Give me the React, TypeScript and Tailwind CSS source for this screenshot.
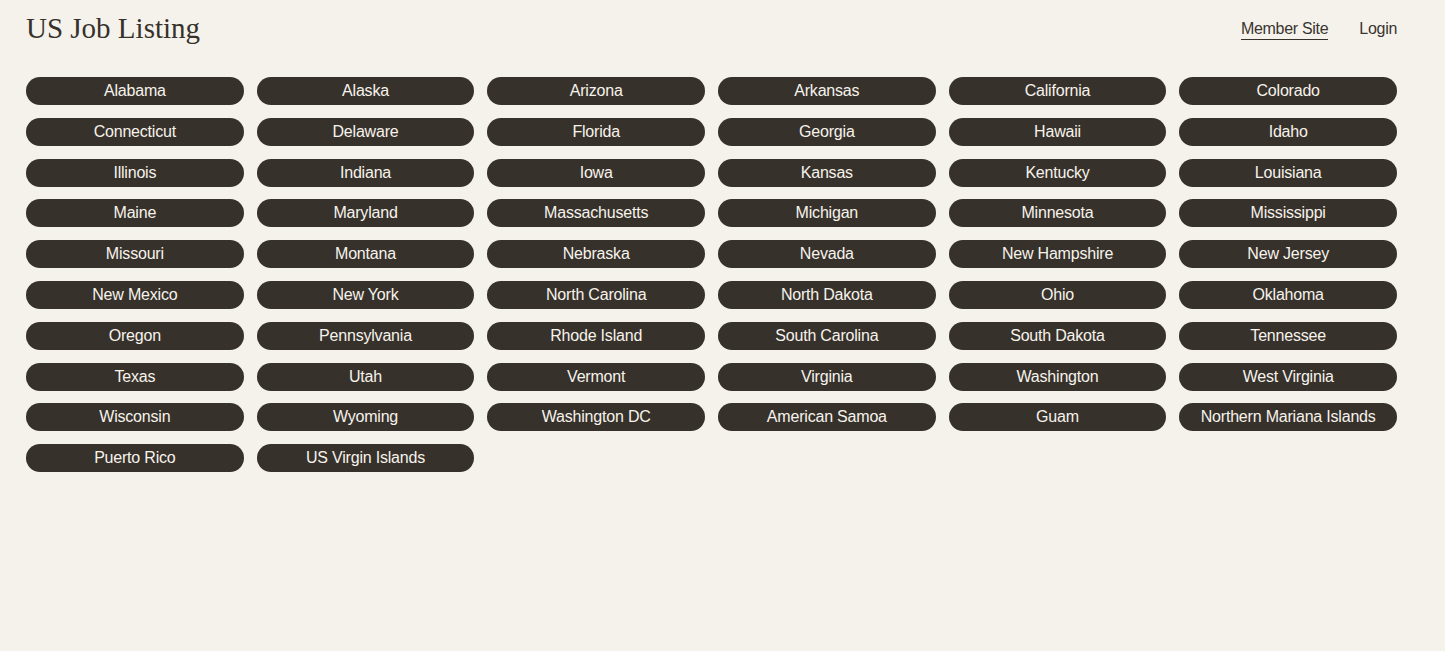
import React from "react";

const states = [
  "Alabama","Alaska","Arizona","Arkansas","California","Colorado",
  "Connecticut","Delaware","Florida","Georgia","Hawaii","Idaho",
  "Illinois","Indiana","Iowa","Kansas","Kentucky","Louisiana",
  "Maine","Maryland","Massachusetts","Michigan","Minnesota","Mississippi",
  "Missouri","Montana","Nebraska","Nevada","New Hampshire","New Jersey",
  "New Mexico","New York","North Carolina","North Dakota","Ohio","Oklahoma",
  "Oregon","Pennsylvania","Rhode Island","South Carolina","South Dakota","Tennessee",
  "Texas","Utah","Vermont","Virginia","Washington","West Virginia",
  "Wisconsin","Wyoming","Washington DC","American Samoa","Guam","Northern Mariana Islands",
  "Puerto Rico","US Virgin Islands",
];

export default function App() {
  return (
    <div className="min-h-[651px] bg-[#f5f2ec] pl-[26px] pr-[48px] pt-[12px]" style={{ fontFamily: '"Liberation Sans", Arial, sans-serif' }}>
      <header className="flex items-center justify-between h-[33px]">
        <h1 className="text-[29px] leading-none text-[#36312b] tracking-[0px]" style={{ fontFamily: '"Liberation Serif", "Times New Roman", serif' }}>
          US Job Listing
        </h1>
        <nav className="flex items-center gap-[31px] text-[16px] text-[#3a3530] tracking-[-0.3px] mt-[2px]">
          <a className="border-b border-[#36312b] pb-[1px] leading-[18px]">Member Site</a>
          <a className="leading-[18px] pb-[1px] border-b border-transparent">Login</a>
        </nav>
      </header>
      <div className="grid grid-cols-6 gap-x-[13px] gap-y-[12.8px] mt-[32px]">
        {states.map((s) => (
          <button
            key={s}
            className="h-[28px] rounded-full bg-[#36312b] text-[#f7f3ec] text-[16px] leading-none flex items-center justify-center tracking-[-0.2px]"
          >
            {s}
          </button>
        ))}
      </div>
    </div>
  );
}
